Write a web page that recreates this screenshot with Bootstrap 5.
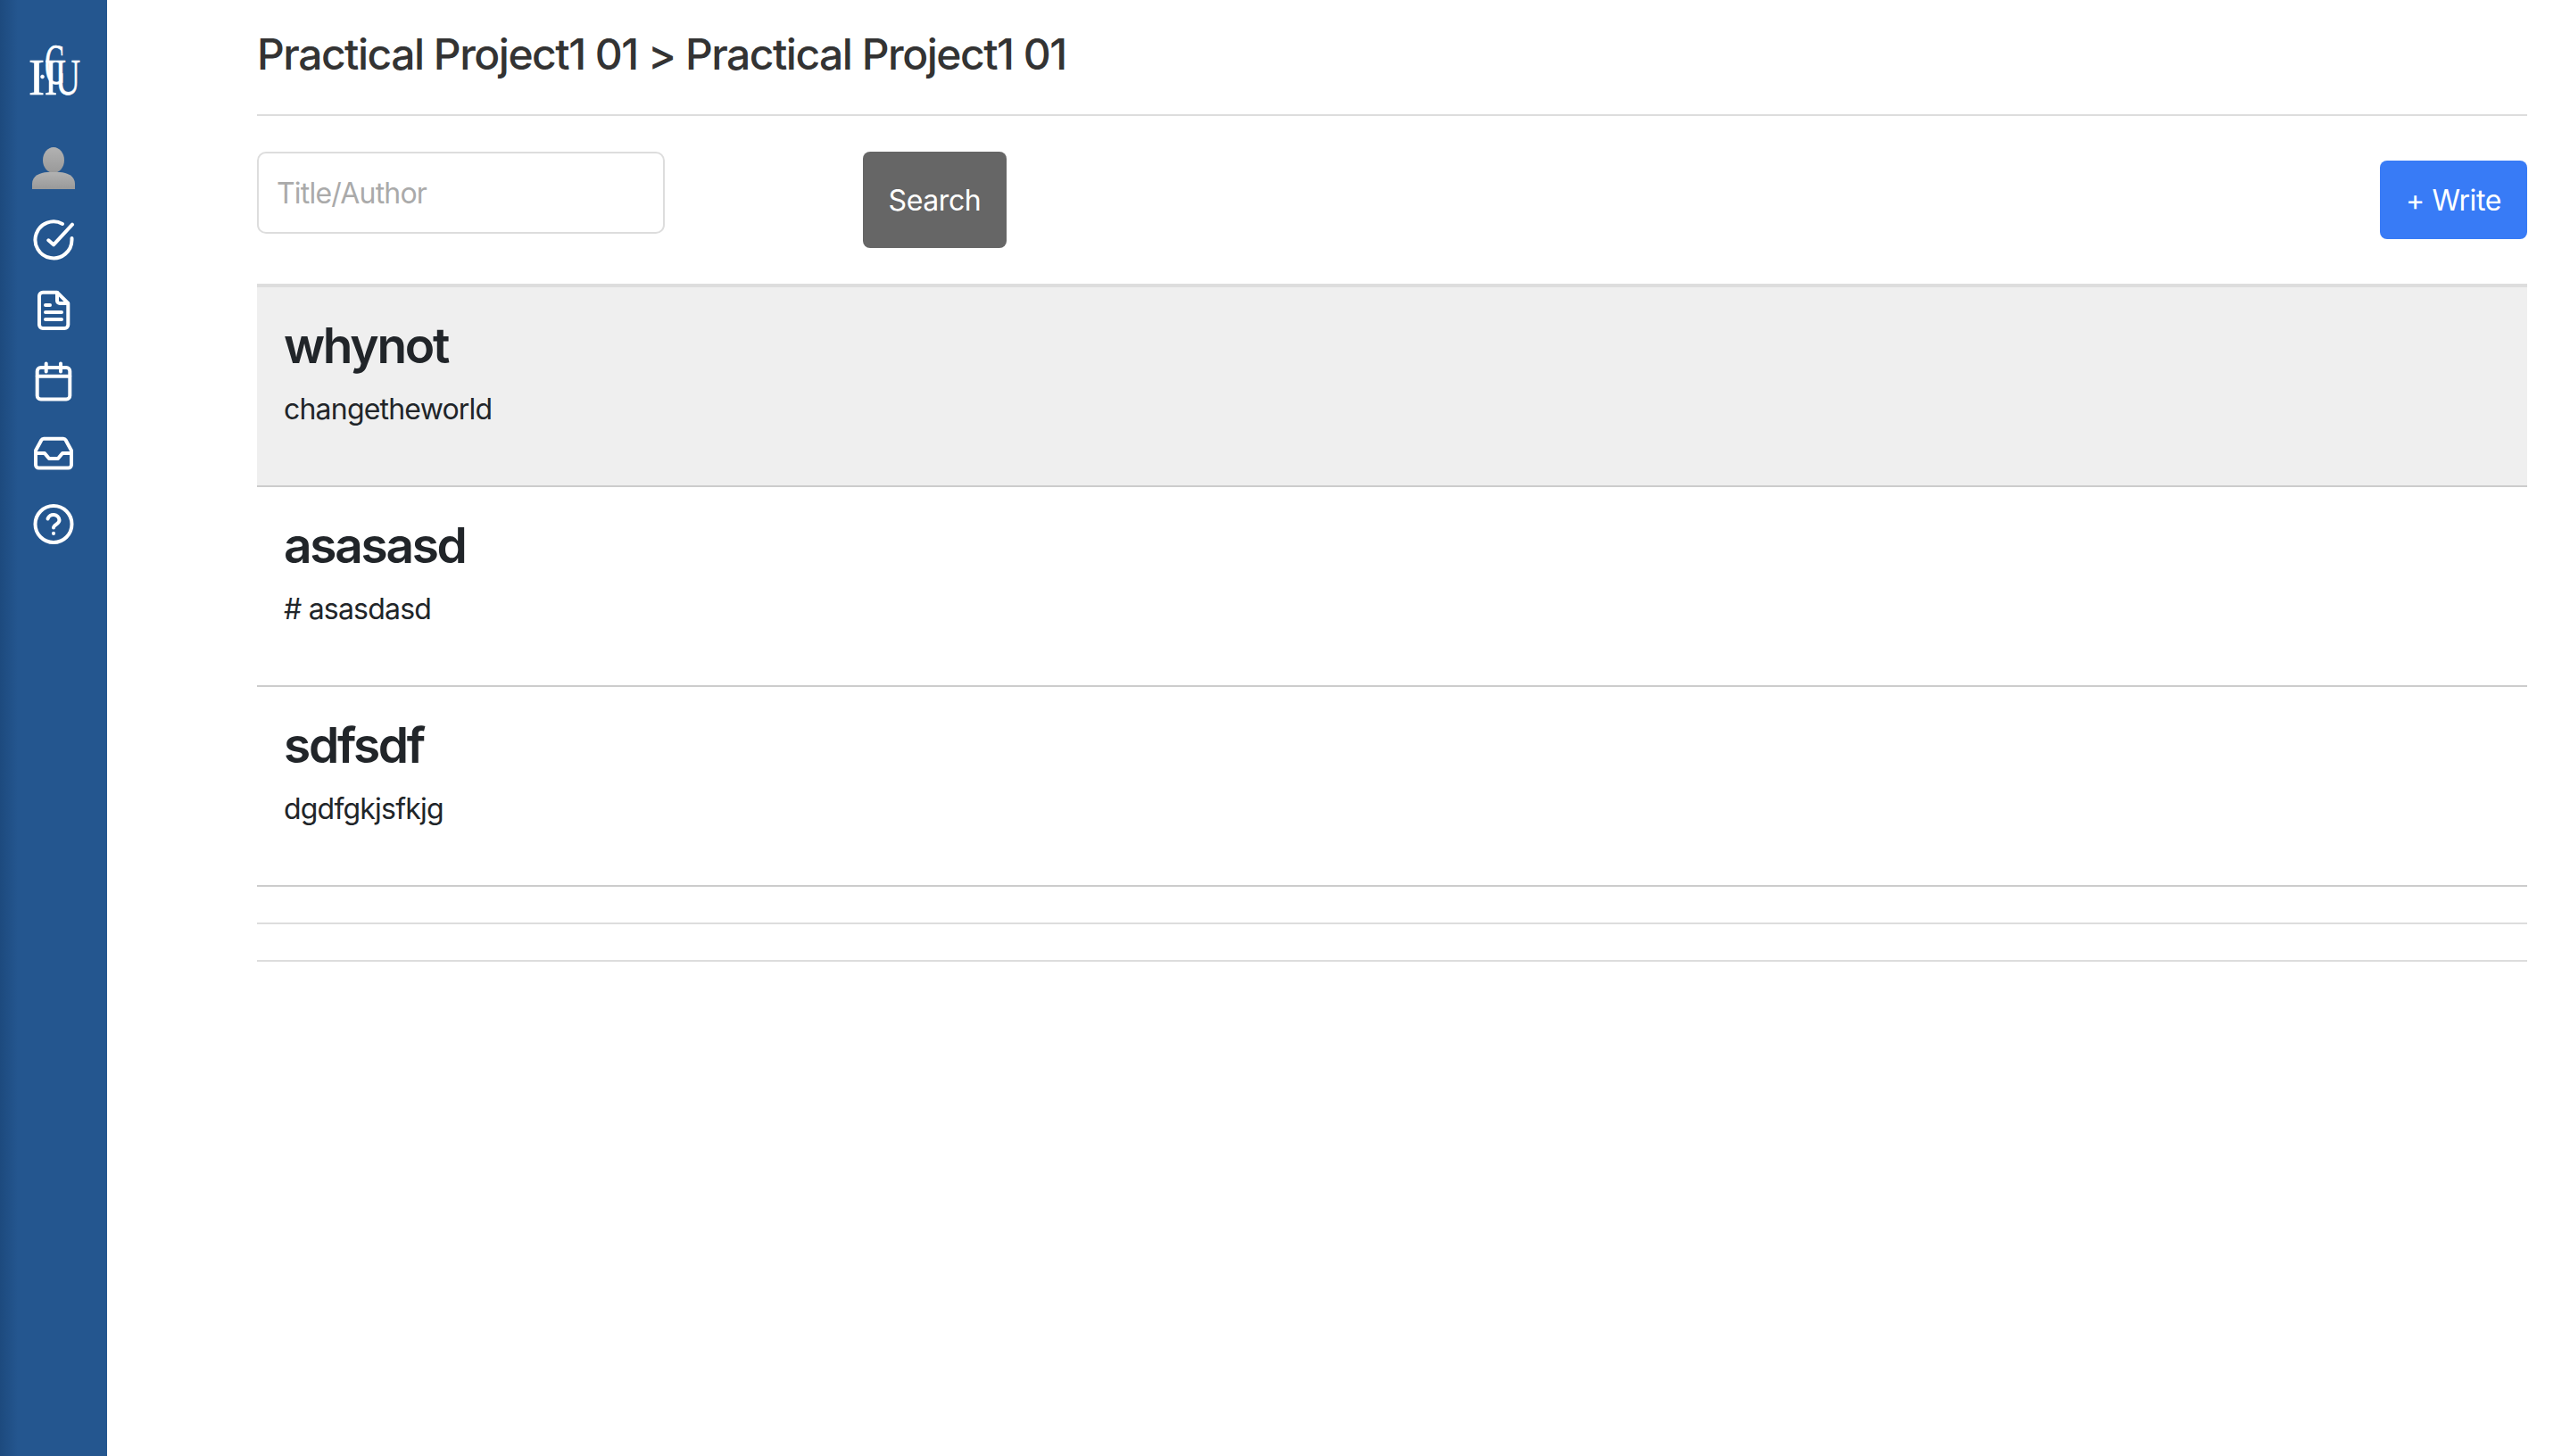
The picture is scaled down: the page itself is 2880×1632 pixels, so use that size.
<!DOCTYPE html>
<html lang="en">
<head>
    <meta charset="UTF-8">
    <meta name="viewport" content="width=device-width, initial-scale=1.0">
    <title>Practical Project1 01</title>
    <link href="https://cdn.jsdelivr.net/npm/bootstrap@5.3.0/dist/css/bootstrap.min.css" rel="stylesheet">
    <script src="https://cdn.jsdelivr.net/npm/bootstrap@5.3.0/dist/js/bootstrap.bundle.min.js"></script>
    <style>
        body {
            font-family: Inter, "Liberation Sans", sans-serif;
            background-color: #fff;
            color: #212529;
            font-size: 32px;
        }
        .side-rail {
            width: 120px;
            min-height: 1632px;
            background: linear-gradient(90deg, #1d4a7e 0, #24568f 20px, #24568f 100%);
            padding-top: 49px;
        }
        .rail-logo {
            height: 60px;
            margin-bottom: 40px;
        }
        .rail-item {
            height: 80px;
        }
        .page-main {
            padding: 0 48px 0 168px;
        }
        .page-head {
            height: 130px;
            border-bottom: 2px solid #ddd;
            padding-top: 29px;
        }
        .page-head h1 {
            font-size: 48px;
            font-weight: 500;
            letter-spacing: -1.5px;
            line-height: 64px;
            color: #333;
            margin: 0;
        }
        .tool-row {
            height: 188px;
            padding-top: 40px;
        }
        .find-input {
            width: 457px;
            height: 92px;
            border: 2px solid #ddd;
            border-radius: 10px;
            padding: 0 20px;
            font-size: 32px;
            letter-spacing: -0.8px;
        }
        .find-input::placeholder {
            color: #aaa;
        }
        .btn-find {
            width: 161px;
            height: 108px;
            margin-left: 222px;
            padding: 2px 0 0;
            background-color: #666;
            color: #fff;
            border: 0;
            border-radius: 8px;
            font-size: 32px;
            letter-spacing: -0.4px;
        }
        .btn-write {
            width: 165px;
            height: 88px;
            margin-top: 10px;
            padding: 2px 0 0;
            background-color: #387bf6;
            color: #fff;
            border: 0;
            border-radius: 8px;
            font-size: 32px;
            letter-spacing: -0.4px;
        }
        .post-list {
            border-top: 4px solid #ddd;
        }
        .post-row {
            height: 224px;
            border-bottom: 2px solid #ccc;
            padding: 31px 30px 0;
        }
        .post-row.is-hover {
            background-color: #efefef;
        }
        .post-row h3 {
            font-size: 55px;
            font-weight: 600;
            line-height: 68px;
            letter-spacing: -2.3px;
            margin: 0 0 16px;
        }
        .post-row p {
            font-size: 32px;
            line-height: 44px;
            letter-spacing: -0.8px;
            margin: 0;
        }
        .post-blank {
            height: 42px;
            border-bottom: 2px solid #ddd;
        }
    </style>
</head>
<body>
    <div class="d-flex">
        <nav class="side-rail flex-shrink-0 d-flex flex-column align-items-center">
            <div class="rail-logo">
                <svg width="60" height="60" viewBox="0 0 60 60" fill="#fff" stroke="#fff" stroke-width="0.600" font-family="Liberation Serif, serif">
                    <text x="2" y="57" font-size="58" textLength="18" lengthAdjust="spacingAndGlyphs">I</text>
                    <circle cx="17.500" cy="37" r="2"/>
                    <text x="20" y="45" font-size="66" textLength="22" lengthAdjust="spacingAndGlyphs">C</text>
                    <text x="20" y="57" font-size="58" textLength="14" lengthAdjust="spacingAndGlyphs">I</text>
                    <text x="32" y="57" font-size="58" textLength="28" lengthAdjust="spacingAndGlyphs">U</text>
                </svg>
            </div>
            <div class="rail-item d-flex align-items-center justify-content-center">
                <svg width="48" height="48" viewBox="0 0 48 48">
                    <defs>
                        <linearGradient id="personFill" x1="0" y1="0" x2="0" y2="1">
                            <stop offset="0" stop-color="#b2b2b2"/>
                            <stop offset="1" stop-color="#999"/>
                        </linearGradient>
                    </defs>
                    <path fill="url(#personFill)" d="M24 0c6.600 0 12 6.500 12 14.500S30.600 29 24 29s-12-6.500-12-14.500S17.400 0 24 0z"/>
                    <path fill="url(#personFill)" d="M0 47v-6c0-9 9-12.500 17-13h14c8 .5 17 4 17 13v6z"/>
                </svg>
            </div>
            <div class="rail-item d-flex align-items-center justify-content-center">
                <svg width="48" height="48" viewBox="0 0 48 48" fill="none" stroke="#fff" stroke-width="4" stroke-linecap="round" stroke-linejoin="round">
                    <path d="M44.500 22v2A20.500 20.500 0 1 1 34 6"/>
                    <path d="M18.300 24.300l5.700 5L45 6.700"/>
                </svg>
            </div>
            <div class="rail-item d-flex align-items-center justify-content-center">
                <svg width="48" height="48" viewBox="0 0 48 48" fill="none" stroke="#fff" stroke-width="4" stroke-linecap="round" stroke-linejoin="round">
                    <path d="M12 2.700h16L40.300 15v24a4 4 0 0 1-4 4H12a4 4 0 0 1-4-4V6.700a4 4 0 0 1 4-4z"/>
                    <path d="M28 3v9a3 3 0 0 0 3 3h9"/>
                    <path d="M15 17h5M15 25h18M15 33h18"/>
                </svg>
            </div>
            <div class="rail-item d-flex align-items-center justify-content-center">
                <svg width="48" height="48" viewBox="0 0 48 48" fill="none" stroke="#fff" stroke-width="4" stroke-linecap="round" stroke-linejoin="round">
                    <rect x="5.700" y="7" width="36.600" height="35.500" rx="4"/>
                    <path d="M5.700 16.700h36.600M15.700 2.500v9M32 2.500v9"/>
                </svg>
            </div>
            <div class="rail-item d-flex align-items-center justify-content-center">
                <svg width="48" height="48" viewBox="0 0 48 48" fill="none" stroke="#fff" stroke-width="4" stroke-linecap="round" stroke-linejoin="round">
                    <path d="M13 6.700h22a3 3 0 0 1 2.600 1.500L44 20v16a3.500 3.500 0 0 1-3.500 3.500h-33A3.500 3.500 0 0 1 4 36V20l6.400-11.800A3 3 0 0 1 13 6.700z"/>
                    <path d="M4 23h10l5 6h10l5-6h10"/>
                </svg>
            </div>
            <div class="rail-item d-flex align-items-center justify-content-center">
                <svg width="48" height="48" viewBox="0 0 48 48" fill="none" stroke="#fff" stroke-width="4" stroke-linecap="round" stroke-linejoin="round">
                    <circle cx="24" cy="22.500" r="20.500"/>
                    <path d="M17.500 16.500a6.700 6.700 0 0 1 13 1.500c0 4.500-6.500 5-6.500 8.500"/>
                    <path d="M24 32.800v.2"/>
                </svg>
            </div>
        </nav>
        <main class="page-main flex-grow-1">
            <div class="page-head">
                <h1>Practical Project1 01 &gt; Practical Project1 01</h1>
            </div>
            <div class="tool-row d-flex align-items-start">
                <input class="form-control find-input" type="text" placeholder="Title/Author">
                <button class="btn btn-find" type="button">Search</button>
                <button class="btn btn-write ms-auto" type="button">+ Write</button>
            </div>
            <div class="post-list">
                <div class="post-row is-hover">
                    <h3>whynot</h3>
                    <p>changetheworld</p>
                </div>
                <div class="post-row">
                    <h3>asasasd</h3>
                    <p># asasdasd</p>
                </div>
                <div class="post-row">
                    <h3>sdfsdf</h3>
                    <p>dgdfgkjsfkjg</p>
                </div>
                <div class="post-blank"></div>
                <div class="post-blank"></div>
            </div>
        </main>
    </div>
</body>
</html>
